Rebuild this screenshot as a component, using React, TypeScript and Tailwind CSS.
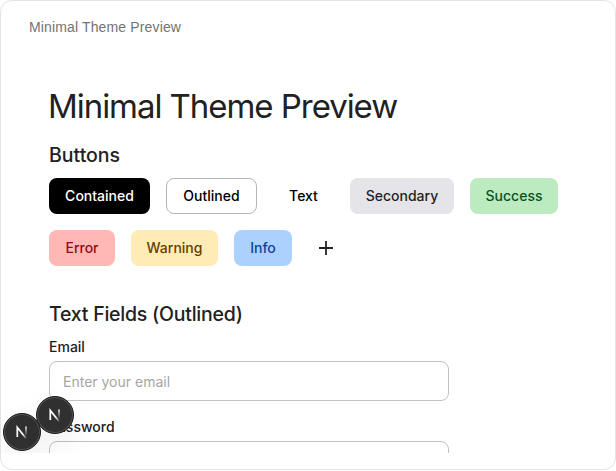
import React from 'react';

const buttons = [
  { label: 'Contained', style: 'w-[101px] bg-black text-white' },
  { label: 'Outlined', style: 'w-[91px] border border-[#b5b5b5] text-black' },
  { label: 'Text', style: 'w-[61px] text-black' },
  { label: 'Secondary', style: 'w-[104px] bg-[#e5e4e9] text-[#1f1f21]' },
  { label: 'Success', style: 'w-[88px] bg-[#bbebbf] text-[#09511f]' },
  { label: 'Error', style: 'w-[66px] bg-[#ffb8b3] text-[#930b1b]' },
  { label: 'Warning', style: 'w-[87px] bg-[#ffebb5] text-[#644100]' },
  { label: 'Info', style: 'w-[58px] bg-[#abd2ff] text-[#10419b]' },
];

function Field({ label, placeholder }: { label: string; placeholder: string }) {
  return (
    <label className="block w-[400px]">
      <span className="block h-6 text-sm leading-5 font-medium text-[#212121]">{label}</span>
      <input
        placeholder={placeholder}
        className="block h-10 w-full rounded-lg border border-[#c2c2c2] bg-white px-[13px] text-sm outline-none placeholder:text-[#a6a6a6]"
      />
    </label>
  );
}

function DevBadge({ id, className }: { id: string; className: string }) {
  return (
    <div
      className={`absolute flex size-[38px] items-center justify-center rounded-full border border-[#1b1b1b] bg-[#303030] shadow-[inset_0_0_0_1px_#555555,0_12px_32px_-4px_rgba(0,0,0,0.1)] ${className}`}
    >
      <svg width="14" height="14" viewBox="0 0 14 14" fill="none">
        <defs>
          <linearGradient id={`${id}-d`} x1="2" y1="2" x2="12.5" y2="13.5" gradientUnits="userSpaceOnUse">
            <stop offset="0.6" stopColor="white" />
            <stop offset="1" stopColor="white" stopOpacity="0" />
          </linearGradient>
          <linearGradient id={`${id}-v`} x1="0" y1="1" x2="0" y2="11" gradientUnits="userSpaceOnUse">
            <stop stopColor="white" />
            <stop offset="1" stopColor="white" stopOpacity="0" />
          </linearGradient>
        </defs>
        <path d="M2.3 12V2.4L11 13.2" stroke={`url(#${id}-d)`} strokeWidth="1.7" />
        <path d="M10.2 1.4h1.6v9.4h-1.6z" fill={`url(#${id}-v)`} />
      </svg>
    </div>
  );
}

export default function App() {
  return (
    <div className="h-[470px] w-[616px] overflow-hidden rounded-xl border border-[#e3e3e3] bg-white font-['Inter',sans-serif] text-[#212121]">
      <header className="flex h-[52px] items-center pl-7 font-['Liberation_Sans',Arial,sans-serif] text-sm tracking-[0.14px] text-[#737373]">
        Minimal Theme Preview
      </header>
      <main className="relative h-[400px] overflow-hidden pt-8 pl-12">
        <h1 className="-ml-px h-[58px] text-[33px] leading-[43px] font-normal tracking-[-1.05px] whitespace-nowrap">
          Minimal Theme Preview
        </h1>
        <h2 className="h-[35px] text-[19.5px] leading-[25px] font-medium">Buttons</h2>
        <div className="flex w-[518px] flex-wrap gap-4">
          {buttons.map(({ label, style }) => (
            <button
              key={label}
              className={`flex h-9 items-center justify-center rounded-lg text-sm font-medium whitespace-nowrap ${style}`}
            >
              {label}
            </button>
          ))}
          <button aria-label="Add" className="flex size-9 items-center justify-center text-[#212121]">
            <svg width="24" height="24" viewBox="0 0 24 24" fill="none" stroke="currentColor" strokeWidth="1.8">
              <path d="M12 5v14M5 12h14" />
            </svg>
          </button>
        </div>
        <h2 className="mt-[35px] h-9 text-[19.5px] leading-[26px] font-medium tracking-[-0.23px]">
          Text Fields (Outlined)
        </h2>
        <div className="flex flex-col gap-4">
          <Field label="Email" placeholder="Enter your email" />
          <Field label="Password" placeholder="" />
        </div>
        <DevBadge id="back" className="top-[360px] left-[2px]" />
        <DevBadge id="front" className="top-[343px] left-[35px]" />
      </main>
    </div>
  );
}
